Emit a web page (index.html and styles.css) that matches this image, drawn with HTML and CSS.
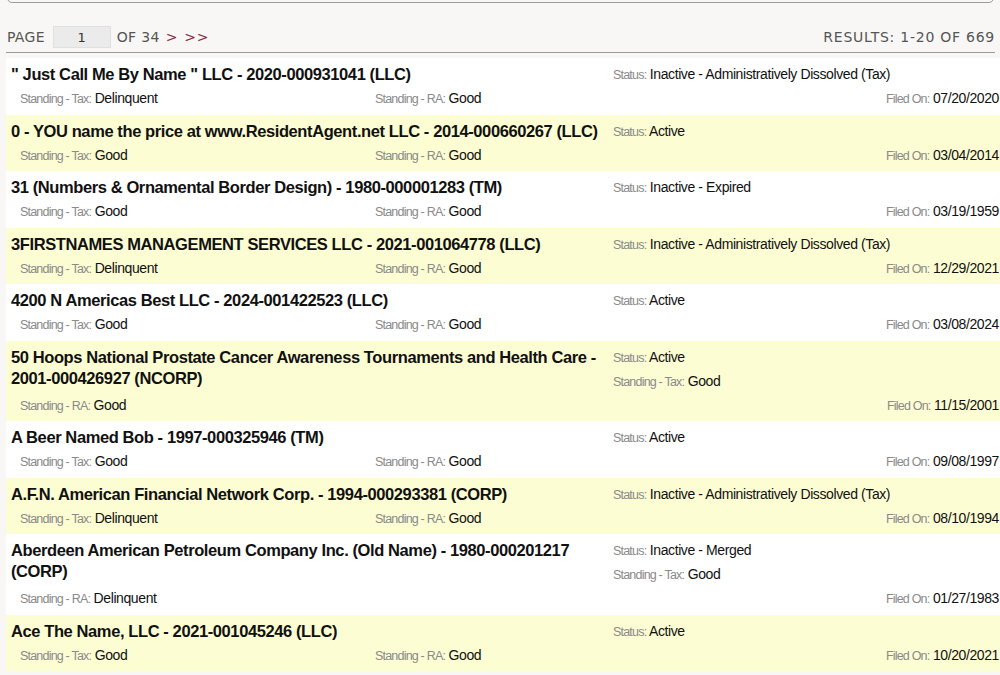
FILE: index.html
```html
<!DOCTYPE html>
<html>
<head>
<meta charset="utf-8">
<link rel="stylesheet" href="styles.css">
</head>
<body>
<div class="page">
  <div class="topbox"></div>
  <div class="pager">
    <div class="pager-left">
      <span>PAGE</span>
      <span class="pagebox">1</span>
      <span>OF 34</span>
      <a class="nav" href="#">&gt;</a>
      <a class="nav" href="#">&gt;&gt;</a>
    </div>
    <div class="results">RESULTS: 1-20 OF 669</div>
  </div>

  <div class="list">
    <div class="row">
      <div class="title">" Just Call Me By Name " LLC - 2020-000931041 (LLC)</div>
      <div class="f status"><span class="lbl">Status:</span> Inactive - Administratively Dissolved (Tax)</div>
      <div class="f tax"><span class="lbl">Standing - Tax:</span> Delinquent</div>
      <div class="f ra"><span class="lbl">Standing - RA:</span> Good</div>
      <div class="f filed"><span class="lbl">Filed On:</span> 07/20/2020</div>
    </div>
    <div class="row alt">
      <div class="title">0 - YOU name the price at www.ResidentAgent.net LLC - 2014-000660267 (LLC)</div>
      <div class="f status"><span class="lbl">Status:</span> Active</div>
      <div class="f tax"><span class="lbl">Standing - Tax:</span> Good</div>
      <div class="f ra"><span class="lbl">Standing - RA:</span> Good</div>
      <div class="f filed"><span class="lbl">Filed On:</span> 03/04/2014</div>
    </div>
    <div class="row">
      <div class="title">31 (Numbers &amp; Ornamental Border Design) - 1980-000001283 (TM)</div>
      <div class="f status"><span class="lbl">Status:</span> Inactive - Expired</div>
      <div class="f tax"><span class="lbl">Standing - Tax:</span> Good</div>
      <div class="f ra"><span class="lbl">Standing - RA:</span> Good</div>
      <div class="f filed"><span class="lbl">Filed On:</span> 03/19/1959</div>
    </div>
    <div class="row alt">
      <div class="title">3FIRSTNAMES MANAGEMENT SERVICES LLC - 2021-001064778 (LLC)</div>
      <div class="f status"><span class="lbl">Status:</span> Inactive - Administratively Dissolved (Tax)</div>
      <div class="f tax"><span class="lbl">Standing - Tax:</span> Delinquent</div>
      <div class="f ra"><span class="lbl">Standing - RA:</span> Good</div>
      <div class="f filed"><span class="lbl">Filed On:</span> 12/29/2021</div>
    </div>
    <div class="row">
      <div class="title">4200 N Americas Best LLC - 2024-001422523 (LLC)</div>
      <div class="f status"><span class="lbl">Status:</span> Active</div>
      <div class="f tax"><span class="lbl">Standing - Tax:</span> Good</div>
      <div class="f ra"><span class="lbl">Standing - RA:</span> Good</div>
      <div class="f filed"><span class="lbl">Filed On:</span> 03/08/2024</div>
    </div>
    <div class="row alt tall">
      <div class="title">50 Hoops National Prostate Cancer Awareness Tournaments and Health Care - 2001-000426927 (NCORP)</div>
      <div class="f status"><span class="lbl">Status:</span> Active</div>
      <div class="f tax"><span class="lbl">Standing - Tax:</span> Good</div>
      <div class="f ra"><span class="lbl">Standing - RA:</span> Good</div>
      <div class="f filed"><span class="lbl">Filed On:</span> 11/15/2001</div>
    </div>
    <div class="row">
      <div class="title">A Beer Named Bob - 1997-000325946 (TM)</div>
      <div class="f status"><span class="lbl">Status:</span> Active</div>
      <div class="f tax"><span class="lbl">Standing - Tax:</span> Good</div>
      <div class="f ra"><span class="lbl">Standing - RA:</span> Good</div>
      <div class="f filed"><span class="lbl">Filed On:</span> 09/08/1997</div>
    </div>
    <div class="row alt">
      <div class="title">A.F.N. American Financial Network Corp. - 1994-000293381 (CORP)</div>
      <div class="f status"><span class="lbl">Status:</span> Inactive - Administratively Dissolved (Tax)</div>
      <div class="f tax"><span class="lbl">Standing - Tax:</span> Delinquent</div>
      <div class="f ra"><span class="lbl">Standing - RA:</span> Good</div>
      <div class="f filed"><span class="lbl">Filed On:</span> 08/10/1994</div>
    </div>
    <div class="row tall">
      <div class="title">Aberdeen American Petroleum Company Inc. (Old Name) - 1980-000201217 (CORP)</div>
      <div class="f status"><span class="lbl">Status:</span> Inactive - Merged</div>
      <div class="f tax"><span class="lbl">Standing - Tax:</span> Good</div>
      <div class="f ra"><span class="lbl">Standing - RA:</span> Delinquent</div>
      <div class="f filed"><span class="lbl">Filed On:</span> 01/27/1983</div>
    </div>
    <div class="row alt">
      <div class="title">Ace The Name, LLC - 2021-001045246 (LLC)</div>
      <div class="f status"><span class="lbl">Status:</span> Active</div>
      <div class="f tax"><span class="lbl">Standing - Tax:</span> Good</div>
      <div class="f ra"><span class="lbl">Standing - RA:</span> Good</div>
      <div class="f filed"><span class="lbl">Filed On:</span> 10/20/2021</div>
    </div>
  </div>
</div>
</body>
</html>
```

FILE: styles.css
```css
html, body {
  margin: 0;
  padding: 0;
  background: #f8f7f5;
  overflow: hidden;
}

.page {
  padding-left: 6px;
}

.topbox {
  height: 20px;
  margin-top: -19px;
  margin-left: 1px;
  margin-right: 6px;
  border: 1px solid #9b9b9b;
  border-radius: 0 0 5px 5px;
}

.pager {
  display: flex;
  justify-content: space-between;
  align-items: center;
  margin-top: 23px;
  margin-right: 5px;
  padding-bottom: 4px;
  border-bottom: 1px solid #9a9a9a;
  font-family: "DejaVu Sans", Verdana, sans-serif;
  font-size: 14px;
  color: #555;
  letter-spacing: 0.3px;
}

.pager-left {
  display: flex;
  align-items: center;
  gap: 6px;
  padding-left: 1px;
}

.pagebox {
  display: inline-block;
  width: 56px;
  height: 20px;
  line-height: 22px;
  margin-left: 2px;
  background: #ebebeb;
  border: 1px solid #e0e0e0;
  text-align: center;
  font-size: 13px;
  color: #333;
}

.nav {
  color: #8b2a3f;
  text-decoration: none;
  letter-spacing: 0.8px;
}

.results {
  letter-spacing: 0.75px;
}

.list {
  margin-top: 5px;
}

.row {
  display: grid;
  grid-template-columns: 355px 247px 1fr;
  grid-template-rows: 24px 24px;
  grid-template-areas:
    "title title status"
    "tax ra filed";
  padding: 4px 1px 4.5px 5px;
  background: #ffffff;
  font-family: "Liberation Sans", Arial, sans-serif;
  color: #111;
}

.row.alt {
  background: #fdfdd3;
}

.row.tall {
  grid-template-rows: 24px 24px 24px;
  grid-template-areas:
    "title title status"
    "title title tax"
    "ra . filed";
}

.title {
  grid-area: title;
  font-weight: bold;
  font-size: 16.5px;
  letter-spacing: -0.4px;
  line-height: 21px;
  padding-top: 2px;
  padding-right: 2px;
}

.f {
  font-size: 14px;
  letter-spacing: -0.4px;
  line-height: 24px;
  height: 24px;
  white-space: nowrap;
}

.lbl {
  font-size: 12.5px;
  line-height: 14px;
  letter-spacing: -0.8px;
  color: #8a8a8a;
}

.status { grid-area: status; }
.tax { grid-area: tax; padding-left: 9px; }
.ra { grid-area: ra; padding-left: 9px; }
.filed { grid-area: filed; text-align: right; }

.row.tall .tax { padding-left: 0; }
```
